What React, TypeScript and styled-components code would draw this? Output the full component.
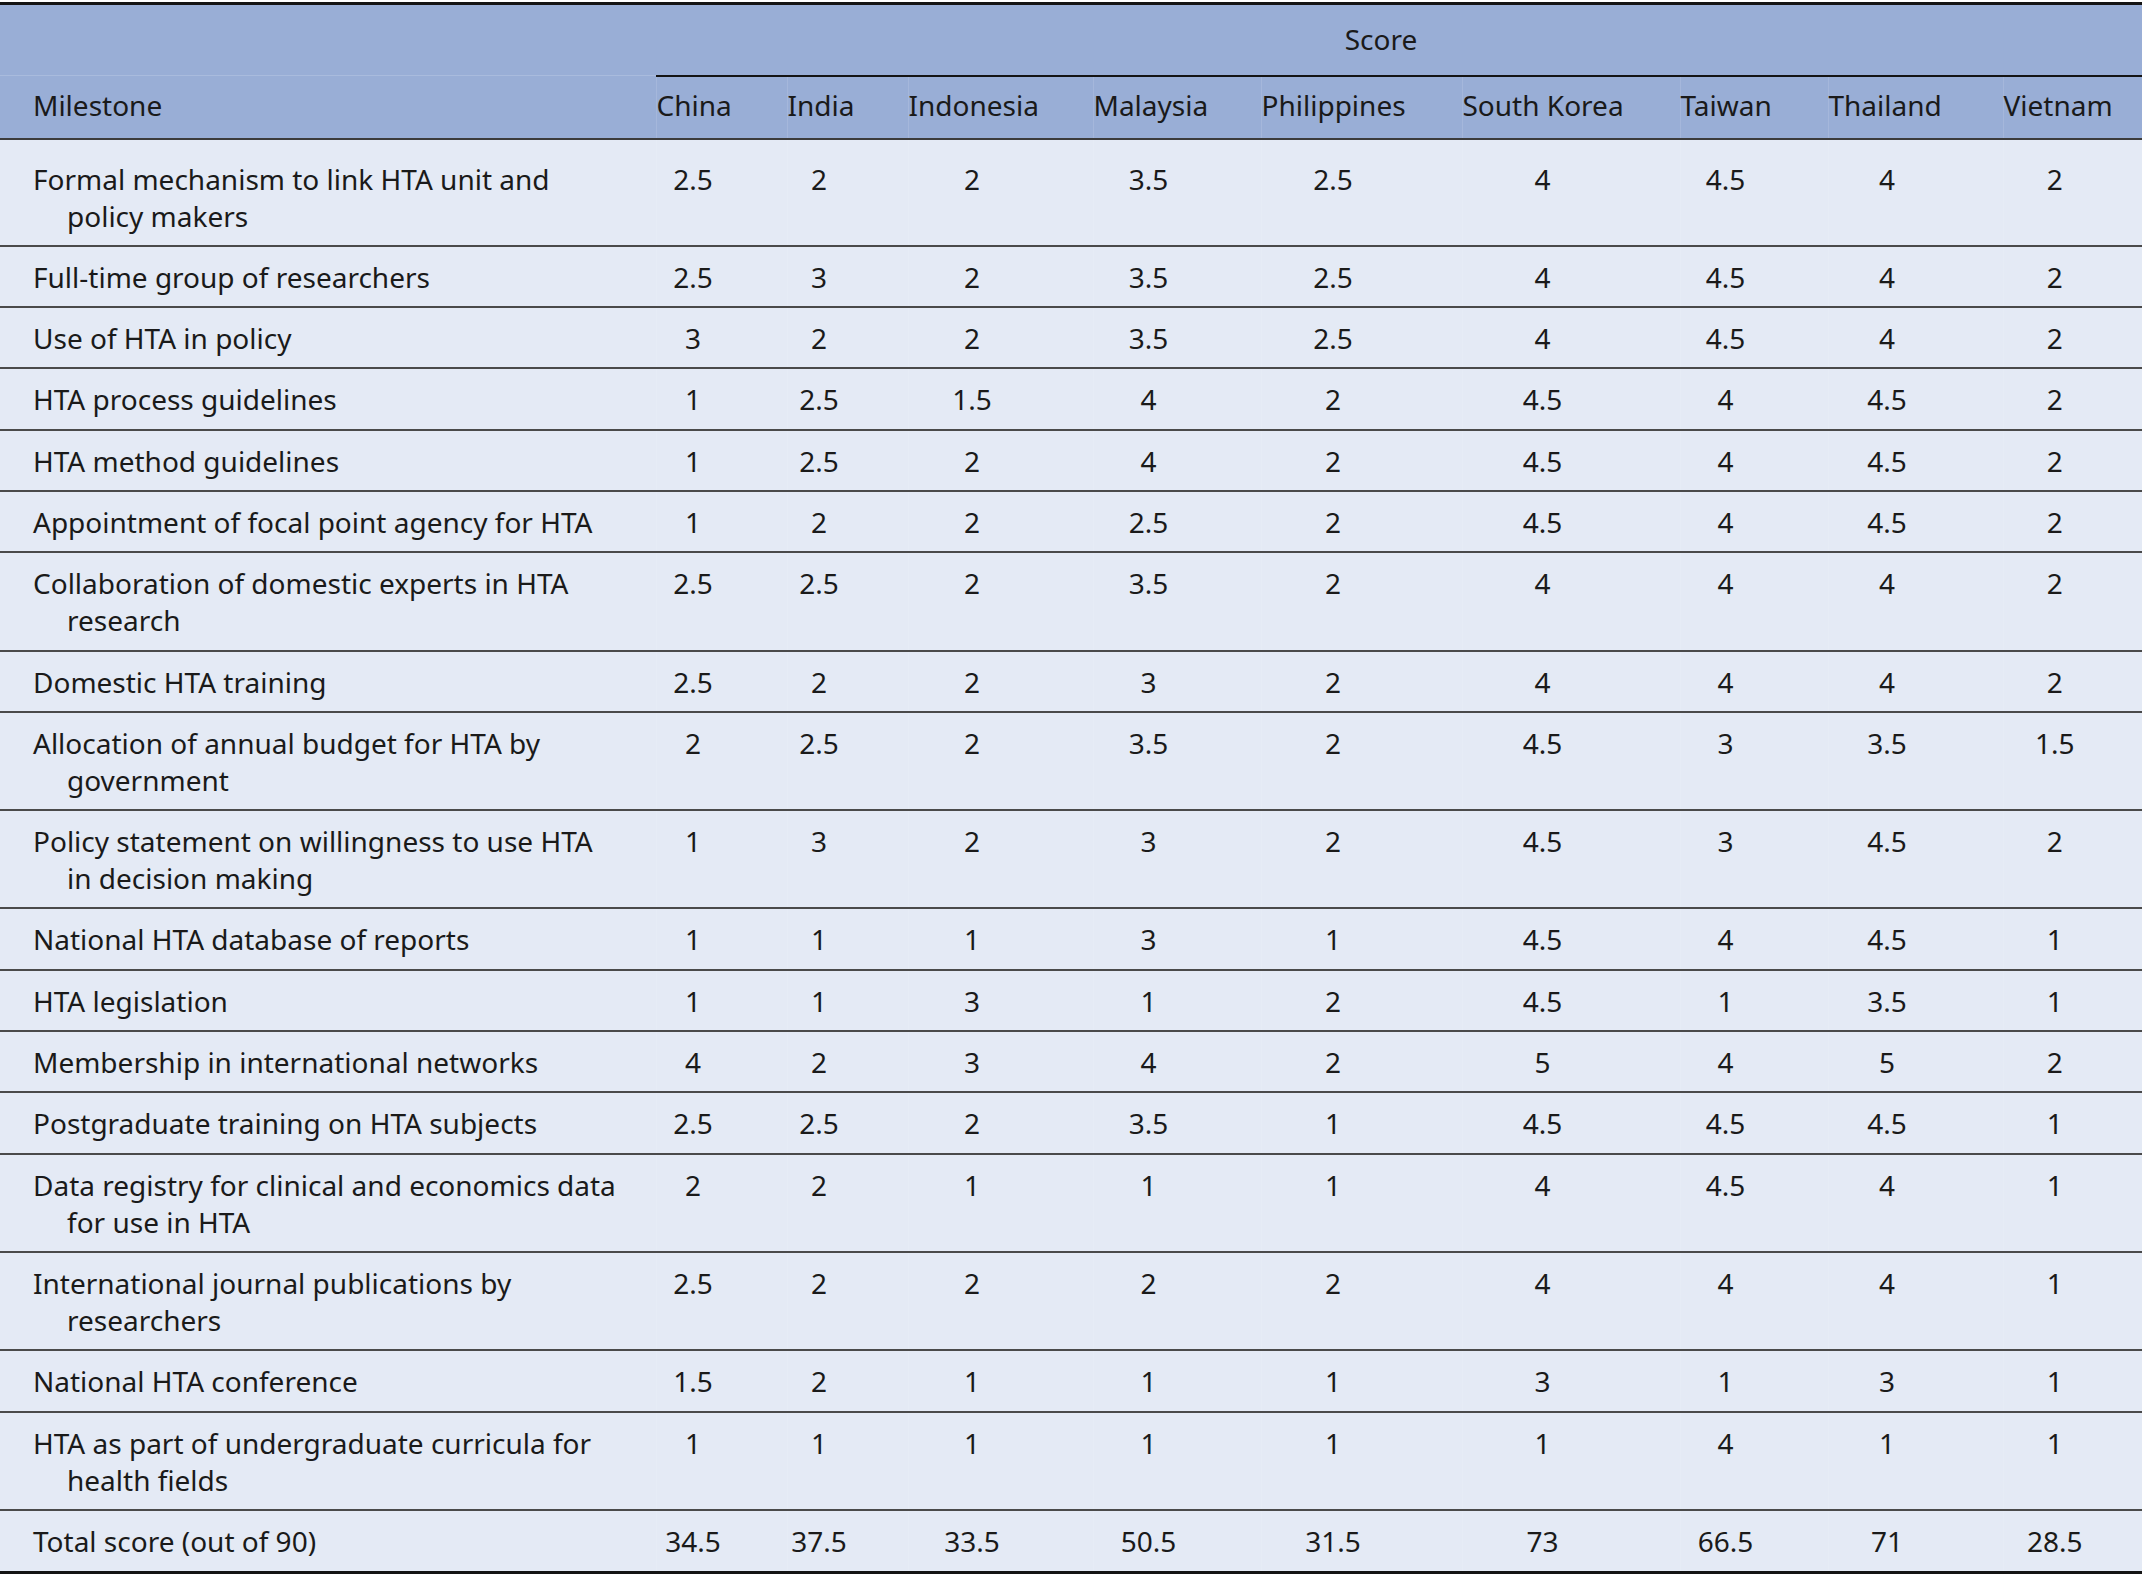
import styled, { createGlobalStyle } from "styled-components";

const GlobalStyle = createGlobalStyle`
    html, body {
        margin: 0;
        padding: 0;
        background: #ffffff;
    }
    body {
        font-family: "Noto Sans", "Open Sans", sans-serif;
        color: #1a1a1a;
    }
`;

type Milestone = {
    label: string[];
    scores: string[];
};

const countries = [
    { name: "China", width: 131 },
    { name: "India", width: 121 },
    { name: "Indonesia", width: 185 },
    { name: "Malaysia", width: 168 },
    { name: "Philippines", width: 201 },
    { name: "South Korea", width: 218 },
    { name: "Taiwan", width: 148 },
    { name: "Thailand", width: 175 },
    { name: "Vietnam", width: 139 },
];

const milestones: Milestone[] = [
    { label: ["Formal mechanism to link HTA unit and", "policy makers"], scores: ["2.5", "2", "2", "3.5", "2.5", "4", "4.5", "4", "2"] },
    { label: ["Full-time group of researchers"], scores: ["2.5", "3", "2", "3.5", "2.5", "4", "4.5", "4", "2"] },
    { label: ["Use of HTA in policy"], scores: ["3", "2", "2", "3.5", "2.5", "4", "4.5", "4", "2"] },
    { label: ["HTA process guidelines"], scores: ["1", "2.5", "1.5", "4", "2", "4.5", "4", "4.5", "2"] },
    { label: ["HTA method guidelines"], scores: ["1", "2.5", "2", "4", "2", "4.5", "4", "4.5", "2"] },
    { label: ["Appointment of focal point agency for HTA"], scores: ["1", "2", "2", "2.5", "2", "4.5", "4", "4.5", "2"] },
    { label: ["Collaboration of domestic experts in HTA", "research"], scores: ["2.5", "2.5", "2", "3.5", "2", "4", "4", "4", "2"] },
    { label: ["Domestic HTA training"], scores: ["2.5", "2", "2", "3", "2", "4", "4", "4", "2"] },
    { label: ["Allocation of annual budget for HTA by", "government"], scores: ["2", "2.5", "2", "3.5", "2", "4.5", "3", "3.5", "1.5"] },
    { label: ["Policy statement on willingness to use HTA", "in decision making"], scores: ["1", "3", "2", "3", "2", "4.5", "3", "4.5", "2"] },
    { label: ["National HTA database of reports"], scores: ["1", "1", "1", "3", "1", "4.5", "4", "4.5", "1"] },
    { label: ["HTA legislation"], scores: ["1", "1", "3", "1", "2", "4.5", "1", "3.5", "1"] },
    { label: ["Membership in international networks"], scores: ["4", "2", "3", "4", "2", "5", "4", "5", "2"] },
    { label: ["Postgraduate training on HTA subjects"], scores: ["2.5", "2.5", "2", "3.5", "1", "4.5", "4.5", "4.5", "1"] },
    { label: ["Data registry for clinical and economics data", "for use in HTA"], scores: ["2", "2", "1", "1", "1", "4", "4.5", "4", "1"] },
    { label: ["International journal publications by", "researchers"], scores: ["2.5", "2", "2", "2", "2", "4", "4", "4", "1"] },
    { label: ["National HTA conference"], scores: ["1.5", "2", "1", "1", "1", "3", "1", "3", "1"] },
    { label: ["HTA as part of undergraduate curricula for", "health fields"], scores: ["1", "1", "1", "1", "1", "1", "4", "1", "1"] },
];

const totals = ["34.5", "37.5", "33.5", "50.5", "31.5", "73", "66.5", "71", "28.5"];

const Table = styled.table`
    margin-top: 2px;
    width: 2142px;
    table-layout: fixed;
    border-collapse: collapse;
    font-size: 28px;
    line-height: 37px;
`;

const Head = styled.thead`
    background-color: #99aed6;
`;

const Body = styled.tbody`
    background-color: #e4eaf5;
`;

const TopCorner = styled.th`
    border-top: 3px solid #141414;
    border-bottom: 1px solid #a9bbdd;
    height: 70px;
    padding: 0;
`;

const ScoreHeader = styled.th`
    border-top: 3px solid #141414;
    border-bottom: 2px solid #141414;
    padding: 0 36px 0 0;
    font-weight: 400;
    text-align: center;
    vertical-align: middle;
`;

const HeaderCell = styled.th<{ $first?: boolean; $last?: boolean }>`
    border-bottom: 2px solid #3c3c3c;
    border-left: ${(p) => (p.$first ? "none" : "1px solid rgba(255, 255, 255, 0.12)")};
    height: 58px;
    padding: ${(p) => (p.$first ? "0 0 3px 33px" : p.$last ? "0 36px 3px 0" : "0 57px 3px 0")};
    font-weight: 400;
    text-align: left;
    white-space: nowrap;
    vertical-align: middle;
`;

const Row = styled.tr<{ $lead?: boolean; $end?: boolean }>`
    & > td {
        padding-top: ${(p) => (p.$lead ? "21px" : "12px")};
        padding-bottom: ${(p) => (p.$end ? "11px" : "10.3px")};
        border-bottom: ${(p) => (p.$end ? "3px solid #141414" : "2px solid #4a4a4a")};
    }
`;

const LabelCell = styled.td`
    padding-left: 67px;
    padding-right: 0;
    text-indent: -34px;
    text-align: left;
    vertical-align: top;
    white-space: nowrap;
`;

const ScoreCell = styled.td<{ $last?: boolean }>`
    padding-left: 0;
    padding-right: ${(p) => (p.$last ? "36px" : "57px")};
    border-left: 1px solid rgba(255, 255, 255, 0.1);
    text-align: center;
    vertical-align: top;
    white-space: nowrap;
`;

function MilestoneLabel({ lines }: { lines: string[] }) {
    return (
        <LabelCell>
            {lines.map((line, i) => (
                <span key={i}>
                    {i > 0 && <br />}
                    {line}
                </span>
            ))}
        </LabelCell>
    );
}

function App() {
    const last = countries.length - 1;
    return (
        <>
            <GlobalStyle />
            <Table>
                <colgroup>
                    <col style={{ width: 656 }} />
                    {countries.map((c) => (
                        <col key={c.name} style={{ width: c.width }} />
                    ))}
                </colgroup>
                <Head>
                    <tr>
                        <TopCorner />
                        <ScoreHeader colSpan={countries.length}>Score</ScoreHeader>
                    </tr>
                    <tr>
                        <HeaderCell $first>Milestone</HeaderCell>
                        {countries.map((c, i) => (
                            <HeaderCell key={c.name} $last={i === last}>
                                {c.name}
                            </HeaderCell>
                        ))}
                    </tr>
                </Head>
                <Body>
                    {milestones.map((m, r) => (
                        <Row key={m.label[0]} $lead={r === 0}>
                            <MilestoneLabel lines={m.label} />
                            {m.scores.map((s, i) => (
                                <ScoreCell key={i} $last={i === last}>
                                    {s}
                                </ScoreCell>
                            ))}
                        </Row>
                    ))}
                    <Row $end>
                        <MilestoneLabel lines={["Total score (out of 90)"]} />
                        {totals.map((s, i) => (
                            <ScoreCell key={i} $last={i === last}>
                                {s}
                            </ScoreCell>
                        ))}
                    </Row>
                </Body>
            </Table>
        </>
    );
}

export default App;
